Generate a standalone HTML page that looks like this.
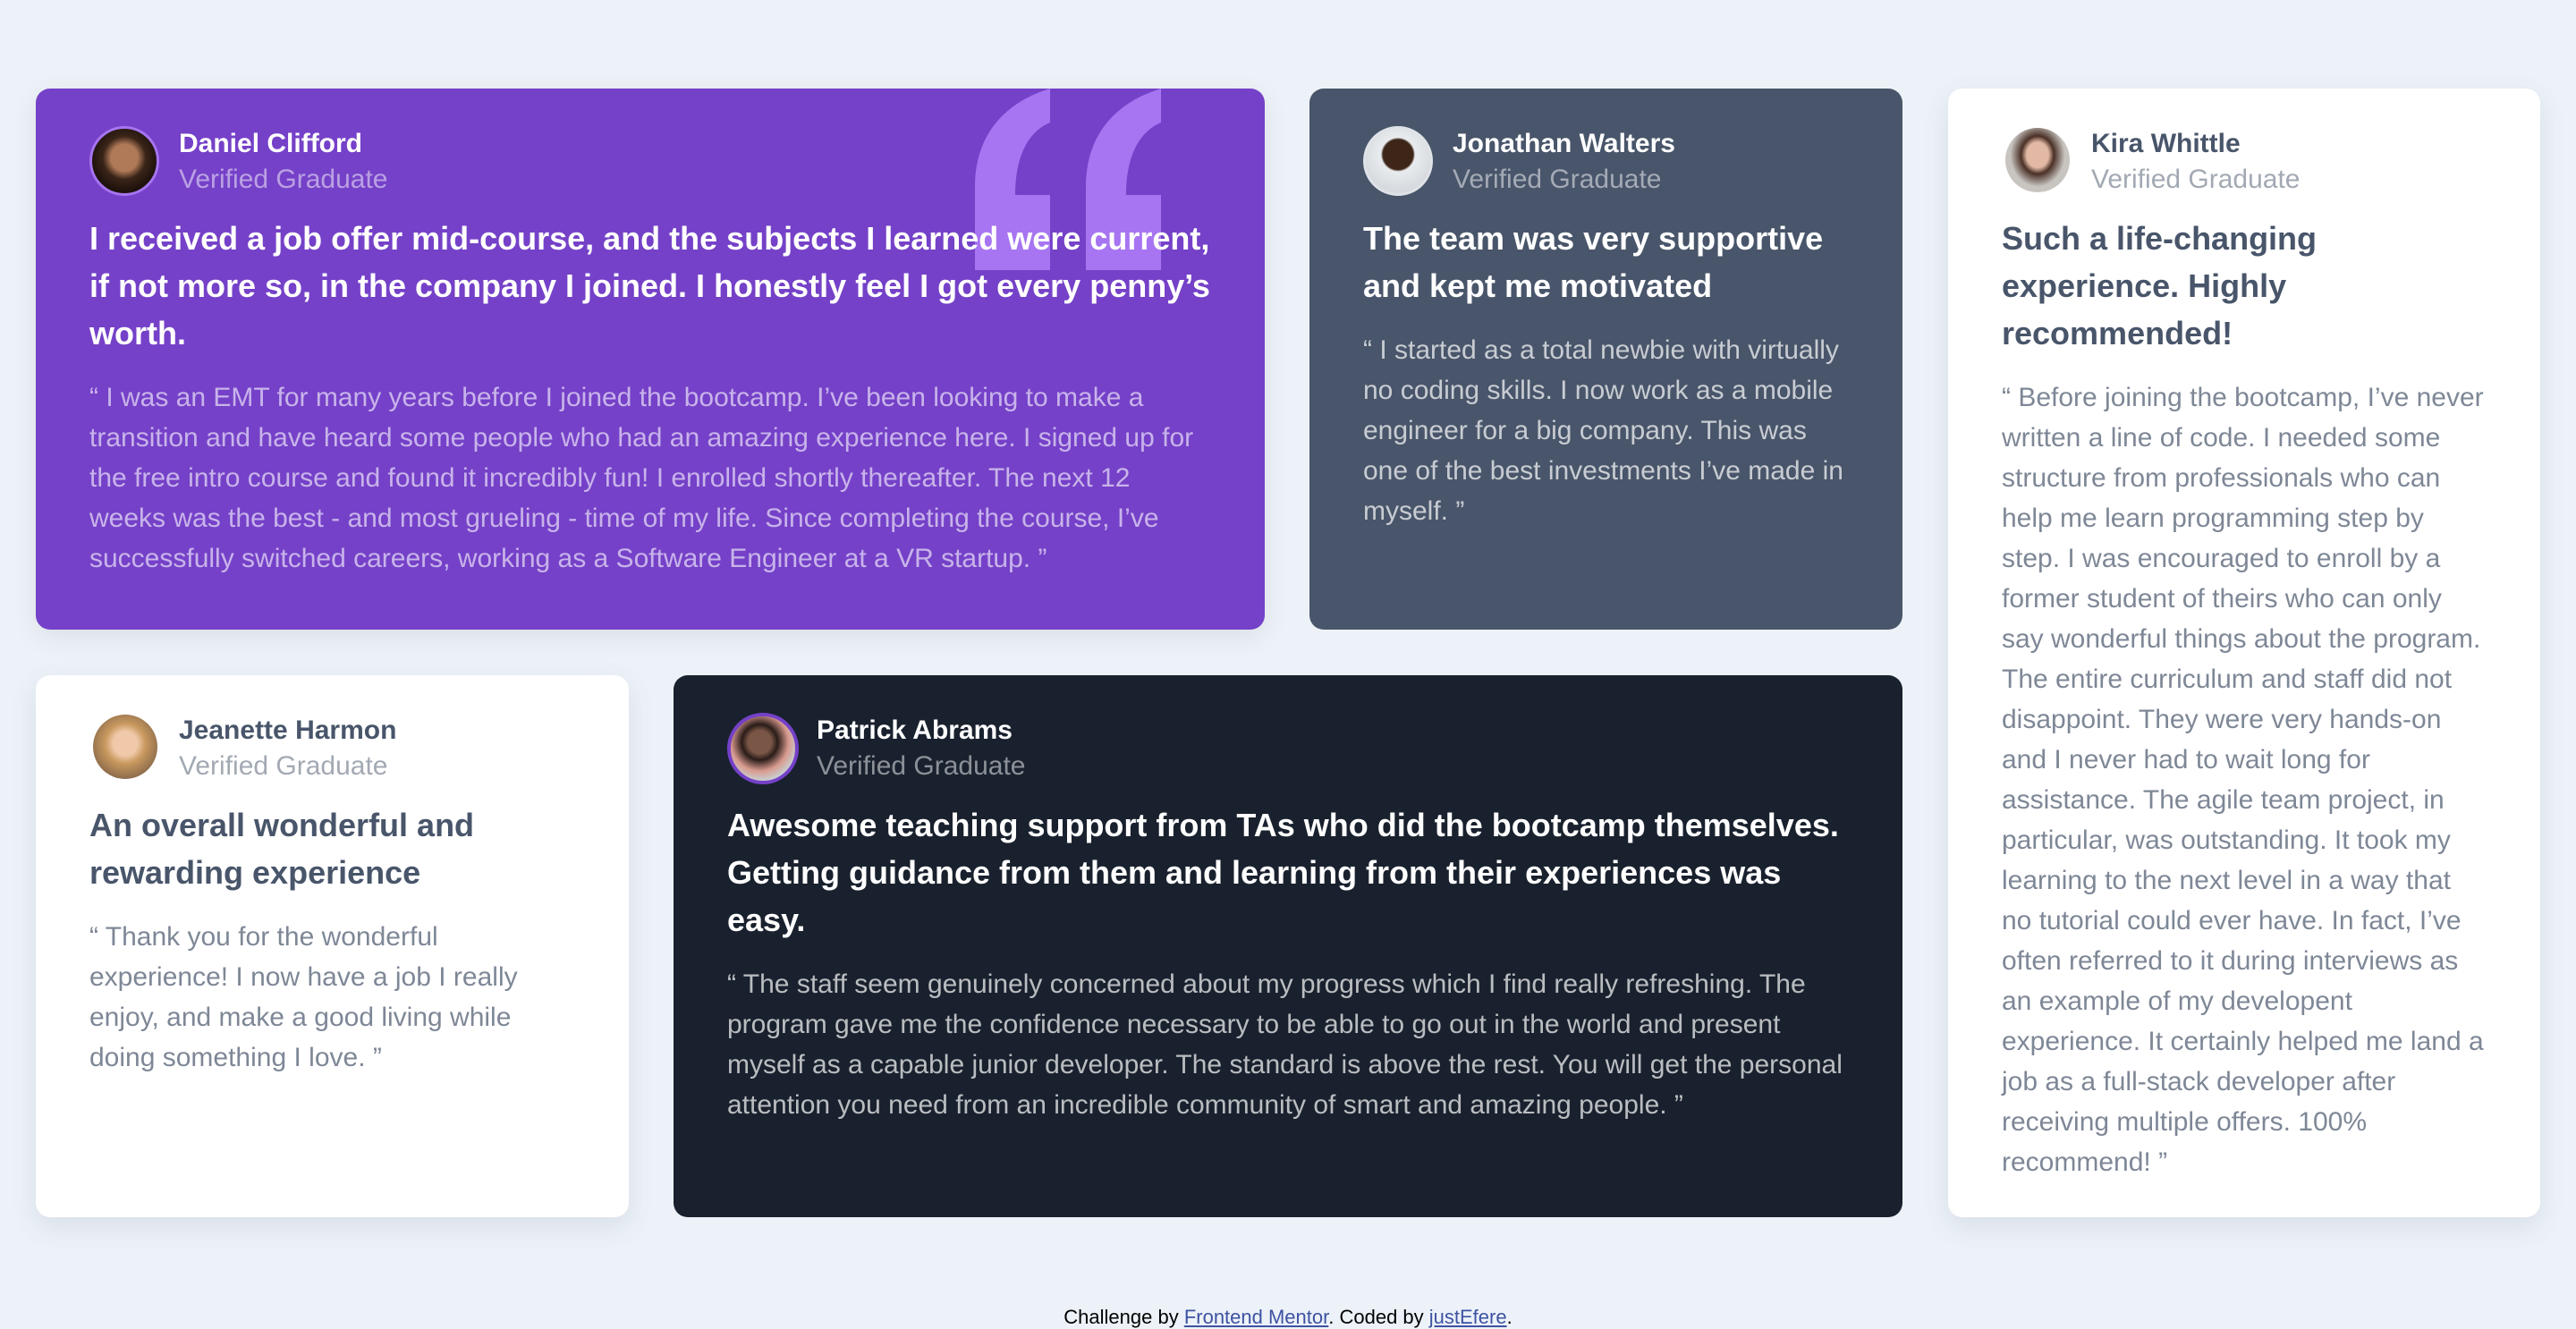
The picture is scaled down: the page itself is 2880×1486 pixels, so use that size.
<!DOCTYPE html>
<html><head><meta charset="utf-8">
<style>
*{margin:0;padding:0;box-sizing:border-box}
html,body{width:2880px;height:1486px;background:#ecf2f8;font-family:"Liberation Sans",Arial,sans-serif;overflow:hidden}
.card{position:absolute;border-radius:16px;padding:42px 60px 0 60px;overflow:hidden}
.hd{position:relative;height:80px;padding-left:100px;z-index:2}
.av{position:absolute;left:0;top:0;width:78px;height:78px;border-radius:50%}
.nm{font-size:30px;font-weight:bold;line-height:40px}
.vg{font-size:30px;line-height:40px;opacity:.5}
h2{position:relative;z-index:2;font-size:36px;line-height:53px;font-weight:bold;margin-top:19px}
p{position:relative;z-index:2;font-size:30px;line-height:45px;margin-top:23px}
.c1{left:40px;top:99px;width:1374px;height:605px;background:#7541c8;color:#fff;box-shadow:0 8px 30px rgba(0,0,0,.08)}
.c1 p{color:#e4d9f6;opacity:.75}
.c2{left:1464px;top:99px;width:663px;height:605px;background:#48556a;color:#fff}
.c2 p{color:#fff;opacity:.7}
.c3{left:2178px;top:99px;width:662px;height:1262px;background:#fff;color:#48556a;box-shadow:0 10px 30px rgba(72,85,106,.12)}
.c3 p,.c4 p{color:#48556a;opacity:.7}
.c4{left:40px;top:755px;width:663px;height:606px;background:#fff;color:#48556a;box-shadow:0 10px 30px rgba(72,85,106,.12)}
.c5{left:753px;top:755px;width:1374px;height:606px;background:#19212e;color:#fff}
.c5 p{color:#fff;opacity:.7}
.light .vg{color:#48556a}
.foot{position:absolute;left:0;right:0;top:1460px;text-align:center;font-size:22px;line-height:26px;color:#000}
.foot a{color:#3e52a3;text-decoration:underline}
</style></head><body>

<div class="card c1">
<svg style="position:absolute;left:1050px;top:0;z-index:1" width="220" height="204" viewBox="0 0 220 204"><g fill="#a775f1"><path d="M84,0 L84,38 C60,48 45,75 45,119 L84,119 L84,203 L0,203 L0,110 C0,50 35,15 84,0 Z"/><path transform="translate(124,0)" d="M84,0 L84,38 C60,48 45,75 45,119 L84,119 L84,203 L0,203 L0,110 C0,50 35,15 84,0 Z"/></g></svg>
<div class="hd"><div class="av" style="background:radial-gradient(circle at 50% 45%,#b07a58 0 28%,#3a2418 45%,#1d120c 70%);border:3px solid #a775f1"></div>
<div class="nm">Daniel Clifford</div><div class="vg">Verified Graduate</div></div>
<h2>I received a job offer mid-course, and the subjects I learned were current, if not more so, in the company I joined. I honestly feel I got every penny’s worth.</h2>
<p>“ I was an EMT for many years before I joined the bootcamp. I’ve been looking to make a transition and have heard some people who had an amazing experience here. I signed up for the free intro course and found it incredibly fun! I enrolled shortly thereafter. The next 12 weeks was the best - and most grueling - time of my life. Since completing the course, I’ve successfully switched careers, working as a Software Engineer at a VR startup. ”</p>
</div>

<div class="card c2">
<div class="hd"><div class="av" style="background:radial-gradient(circle at 50% 40%,#3d2618 0 30%,#e9ecef 34%,#d7dade 70%);border:3px solid #dfe3e8"></div>
<div class="nm">Jonathan Walters</div><div class="vg">Verified Graduate</div></div>
<h2>The team was very supportive and kept me motivated</h2>
<p>“ I started as a total newbie with virtually no coding skills. I now work as a mobile engineer for a big company. This was one of the best investments I’ve made in myself. ”</p>
</div>

<div class="card c3 light">
<div class="hd"><div class="av" style="left:4px;top:2px;width:72px;height:72px;background:radial-gradient(ellipse at 50% 42%,#e2b9a4 0 24%,#4a3026 36%,#c8c4c0 60%)"></div>
<div class="nm">Kira Whittle</div><div class="vg">Verified Graduate</div></div>
<h2>Such a life-changing experience. Highly recommended!</h2>
<p>“ Before joining the bootcamp, I’ve never written a line of code. I needed some structure from professionals who can help me learn programming step by step. I was encouraged to enroll by a former student of theirs who can only say wonderful things about the program. The entire curriculum and staff did not disappoint. They were very hands-on and I never had to wait long for assistance. The agile team project, in particular, was outstanding. It took my learning to the next level in a way that no tutorial could ever have. In fact, I’ve often referred to it during interviews as an example of my developent experience. It certainly helped me land a job as a full-stack developer after receiving multiple offers. 100% recommend! ”</p>
</div>

<div class="card c4 light">
<div class="hd"><div class="av" style="left:4px;top:2px;width:72px;height:72px;background:radial-gradient(circle at 50% 45%,#f0c9aa 0 25%,#c9995f 42%,#8a6a4a 75%)"></div>
<div class="nm">Jeanette Harmon</div><div class="vg">Verified Graduate</div></div>
<h2>An overall wonderful and rewarding experience</h2>
<p>“ Thank you for the wonderful experience! I now have a job I really enjoy, and make a good living while doing something I love. ”</p>
</div>

<div class="card c5">
<div class="hd"><div class="av" style="width:80px;height:80px;background:radial-gradient(circle at 45% 40%,#7a5646 0 22%,#2a1c18 34%,#d89a8e 55%,#c8d2d4 75%);border:4px solid #7541c8"></div>
<div class="nm">Patrick Abrams</div><div class="vg">Verified Graduate</div></div>
<h2>Awesome teaching support from TAs who did the bootcamp themselves. Getting guidance from them and learning from their experiences was easy.</h2>
<p>“ The staff seem genuinely concerned about my progress which I find really refreshing. The program gave me the confidence necessary to be able to go out in the world and present myself as a capable junior developer. The standard is above the rest. You will get the personal attention you need from an incredible community of smart and amazing people. ”</p>
</div>

<div class="foot">Challenge by <a>Frontend Mentor</a>. Coded by <a>justEfere</a>.</div>
</body></html>
